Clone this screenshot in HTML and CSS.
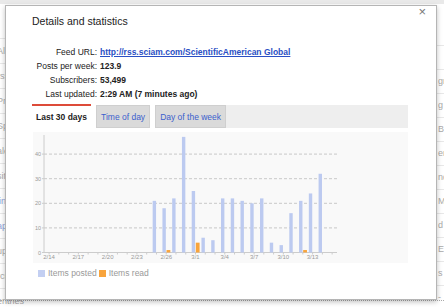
FILE: index.html
```html
<!DOCTYPE html>
<html lang="en">
<head>
	<meta charset="UTF-8">
	<title>Details and statistics</title>
	<link rel="stylesheet" href="styles.css">
</head>
<body>
	<div class="topbar"></div>
	<div class="page">
		<div class="nav">
			<div class="nav-row">All items</div>
			<div class="nav-row">rss feeds</div>
			<div class="nav-row">Profile</div>
			<div class="nav-row">Sports</div>
			<div class="nav-row">alerts</div>
			<div class="nav-row">sites</div>
			<div class="nav-row link">links</div>
			<div class="nav-row link">apps</div>
			<div class="nav-row">update</div>
			<div class="nav-row">rcmd</div>
			<div class="nav-row">entries</div>
		</div>
		<div class="list"></div>
		<div class="edge">
			<div class="edge-row"></div>
			<div class="edge-row">gr</div>
			<div class="edge-row">g</div>
			<div class="edge-row">B</div>
			<div class="edge-row">er</div>
			<div class="edge-row">nd</div>
			<div class="edge-row">M</div>
			<div class="edge-row">d</div>
			<div class="edge-row">Ea</div>
			<div class="edge-row">s</div>
			<div class="edge-row">-</div>
		</div>
	</div>

	<div class="dialog">
		<span class="close">×</span>
		<h1 class="title">Details and statistics</h1>
		<div class="info">
			<span class="label">Feed URL:</span>
			<a class="value link-value" href="#">http://rss.sciam.com/ScientificAmerican Global</a>
			<span class="label">Posts per week:</span>
			<span class="value">123.9</span>
			<span class="label">Subscribers:</span>
			<span class="value">53,499</span>
			<span class="label">Last updated:</span>
			<span class="value">2:29 AM (7 minutes ago)</span>
		</div>
		<div class="tabs">
			<div class="tab selected">Last 30 days</div>
			<div class="tab">Time of day</div>
			<div class="tab">Day of the week</div>
			<div class="tab-fill"></div>
		</div>
		<div class="chart">
			<svg id="chart" width="375" height="131"></svg>
		</div>
		<div class="legend">
			<span class="swatch posted"></span><span class="legend-text">Items posted</span>
			<span class="swatch read"></span><span class="legend-text">Items read</span>
		</div>
	</div>

	<script>
		(function() {
			var posted=[0,0,0,0,0,0,0,0,0,0,0,21,18,22,47,25,6,5,22,22,21,20,22,4,3,16,21,24,32,0];
			var read=[0,0,0,0,0,0,0,0,0,0,0,0,1,0,0,4,0,0,0,0,0,0,0,0,0,0,1,0,0,0];
			var zero=120.5;//y of the 0 line
			var unit=2.46;//px per item
			var axisX=11;
			var axisEnd=304;
			var svg="";
			//grid lines and y labels
			for (var v = 10; v <= 40; v += 10) {
				var gy=zero-v*unit;
				svg+='<line x1="'+axisX+'" y1="'+gy+'" x2="'+axisEnd+'" y2="'+gy+'" class="grid"/>';
				svg+='<line x1="'+(axisX-2)+'" y1="'+gy+'" x2="'+axisX+'" y2="'+gy+'" class="axis"/>';
				svg+='<text x="8" y="'+(gy+2)+'" class="ylab">'+v+'</text>';
			}
			svg+='<text x="8" y="'+(zero+2)+'" class="ylab">0</text>';
			svg+='<line x1="'+axisX+'" y1="3" x2="'+axisX+'" y2="'+zero+'" class="axis"/>';
			svg+='<line x1="'+(axisX-2)+'" y1="'+zero+'" x2="'+axisEnd+'" y2="'+zero+'" class="axis"/>';
			for (var d = 0; d < posted.length; d++) {
				var left=12.3+d*9.76;
				var c=left+3.8;
				svg+='<line x1="'+c+'" y1="'+zero+'" x2="'+c+'" y2="'+(zero+2)+'" class="axis"/>';
				if(posted[d]) {
					var h=posted[d]*unit;
					svg+='<rect x="'+left+'" y="'+(zero-h)+'" width="3.4" height="'+h+'" class="bar-posted"/>';
				}
				if(read[d]) {
					var h2=read[d]*unit;
					svg+='<rect x="'+(c+0.3)+'" y="'+(zero-h2)+'" width="3.8" height="'+h2+'" class="bar-read"/>';
				}
				if(d%3==0) {
					var label=d<15 ? "2/"+(14+d) : "3/"+(d-14);
					svg+='<text x="'+c+'" y="127" class="xlab">'+label+'</text>';
				}
			}
			document.getElementById("chart").innerHTML=svg;
		})();
	</script>
</body>
</html>
```

FILE: styles.css
```css
body {
	margin: 0;
	height: 307px;
	overflow: hidden;
	background-color: #fff;
	font-family: "Liberation Sans", Arial, sans-serif;
}
.topbar {
	height: 4px;
	background-color: #e9e9e9;
}
.page {
	display: grid;
	grid-template-columns: 200px 1fr 7px;
	height: 296px;
	border-bottom: 1px dotted #aaa;
}
.nav {
	padding-top: 34px;
}
.nav-row {
	height: 24px;
	border-top: 1px solid #e8e8e8;
	line-height: 24px;
	font-size: 9px;
	color: #aaa;
	text-indent: -3px;
	white-space: nowrap;
	overflow: hidden;
}
.nav-row.link {
	color: #8fa3d9;
}
.edge {
	padding-top: 41px;
	overflow: hidden;
}
.edge-row {
	height: 23px;
	border-top: 1px solid #e8e8e8;
	padding-left: 1px;
	line-height: 23px;
	font-size: 9px;
	color: #aaa;
	white-space: nowrap;
}

.dialog {
	position: absolute;
	top: 5px;
	left: 5px;
	width: 432px;
	height: 295px;
	box-sizing: border-box;
	padding: 9px 28px 0 26px;
	background-color: #fff;
	border: 1px solid #b5b5b5;
	box-shadow: 0 2px 5px rgba(0, 0, 0, 0.25);
}
.close {
	position: absolute;
	top: -2px;
	right: 10px;
	font-size: 13px;
	color: #777;
}
.title {
	margin: 0;
	font-size: 10.5px;
	font-weight: normal;
	line-height: 13px;
	color: #222;
}
.info {
	display: grid;
	grid-template-columns: 65px auto;
	column-gap: 3px;
	margin-top: 17px;
	font-size: 8.5px;
	line-height: 14px;
	color: #222;
}
.label {
	text-align: right;
}
.value {
	font-weight: bold;
}
.link-value {
	color: #2a4fc4;
}
.tabs {
	display: flex;
	height: 23px;
	margin-top: 4px;
	font-size: 8.5px;
}
.tab {
	padding: 0 4px;
	line-height: 22px;
	background-color: #dadada;
	border: 1px solid #cfcfcf;
	color: #3a5fcd;
}
.tab + .tab {
	margin-left: 5px;
}
.tab.selected {
	padding: 0 4px;
	border: none;
	border-top: 2px solid #dd4b39;
	background-color: #fff;
	color: #222;
	font-weight: bold;
	line-height: 23px;
	margin-top: -1px;
}
.tab-fill {
	flex: 1;
	background-color: #eee;
}
.chart {
	width: 375px;
	height: 131px;
	margin: 4px 0 0 1px;
	background-color: #f9f9f9;
}
.chart svg {
	display: block;
}
.grid {
	stroke: #bbb;
	stroke-width: 0.8;
	stroke-dasharray: 3 2;
}
.axis {
	stroke: #ccc;
	stroke-width: 1;
}
.bar-posted {
	fill: #bccaf0;
}
.bar-read {
	fill: #f8a43c;
}
.ylab {
	font-size: 5.5px;
	fill: #999;
	text-anchor: end;
}
.xlab {
	font-size: 6px;
	fill: #999;
	text-anchor: middle;
}
.legend {
	display: flex;
	align-items: center;
	margin-top: 6px;
	padding-left: 6px;
	font-size: 8.5px;
	line-height: 9px;
	color: #999;
}
.swatch {
	width: 7px;
	height: 7px;
	margin-right: 3px;
}
.swatch.posted {
	background-color: #c3cff2;
}
.swatch.read {
	margin-left: 2px;
	background-color: #f8a43c;
}
```
